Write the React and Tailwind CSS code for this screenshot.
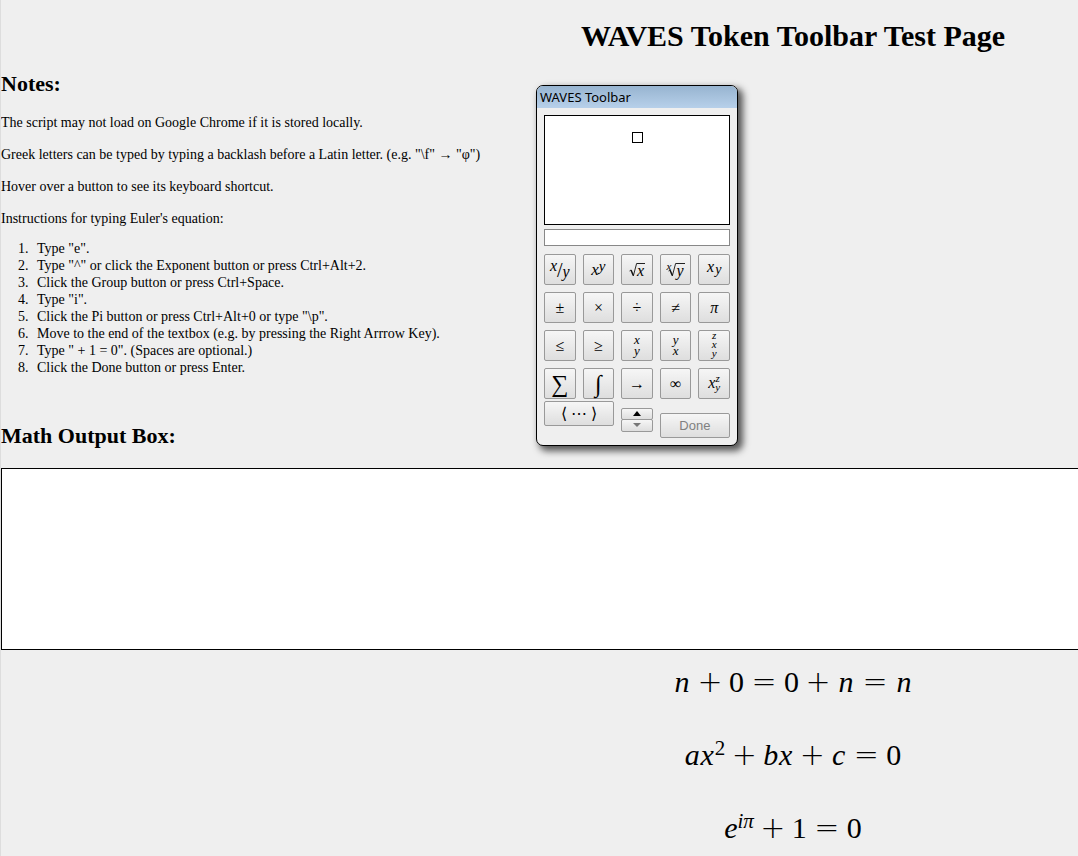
import React from "react";

const notes = [
  "The script may not load on Google Chrome if it is stored locally.",
  'Greek letters can be typed by typing a backlash before a Latin letter. (e.g. "\\f" → "φ")',
  "Hover over a button to see its keyboard shortcut.",
  "Instructions for typing Euler's equation:",
];

const steps = [
  'Type "e".',
  'Type "^" or click the Exponent button or press Ctrl+Alt+2.',
  "Click the Group button or press Ctrl+Space.",
  'Type "i".',
  'Click the Pi button or press Ctrl+Alt+0 or type "\\p".',
  "Move to the end of the textbox (e.g. by pressing the Right Arrrow Key).",
  'Type " + 1 = 0". (Spaces are optional.)',
  "Click the Done button or press Enter.",
];

const face =
  "rounded-[2px] border border-[#999] bg-linear-to-b from-[#f6f6f6] to-[#dedede] hover:to-[#ececec]";

function Root({ index, children }) {
  return (
    <span className="flex items-center italic text-[16px] leading-4">
      {index && <span className="-mr-[3px] -mt-2 text-[11px] leading-2">{index}</span>}
      <svg width="8" height="16" viewBox="0 0 8 16" fill="none" stroke="#111" aria-hidden="true">
        <path d="M0.5 9 L2 8" strokeWidth="0.8" />
        <path d="M2 8 L4.3 13.5" strokeWidth="1.5" />
        <path d="M4.3 14 L7.6 1.5 H8" strokeWidth="0.9" />
      </svg>
      <span className="h-[14px] border-t border-[#222] pr-px leading-[14px]">{children}</span>
    </span>
  );
}

const keys = [
  ["Fraction", <span className="flex items-center italic text-[16px] leading-4"><span className="pb-2">x</span><span className="text-[20px] not-italic">/</span><span className="pt-1">y</span></span>],
  ["Exponent", <span className="flex italic text-[17px] leading-4"><span>x</span><span className="-mt-1 text-[15px]">y</span></span>],
  ["Square root", <Root>x</Root>],
  ["Nth root", <Root index="x">y</Root>],
  ["Subscript", <span className="flex gap-px pb-[2px] italic text-[16px] leading-4"><span>x</span><span className="pt-[3px] text-[14px]">y</span></span>],
  ["Plus or minus", "±"],
  ["Times", "×"],
  ["Divide", "÷"],
  ["Not equal", "≠"],
  ["Pi", <i>π</i>],
  ["Less than or equal", "≤"],
  ["Greater than or equal", "≥"],
  ["Underscript", <span className="flex flex-col pb-[2px] italic text-[13px] leading-[11px]"><span>x</span><span>y</span></span>],
  ["Overscript", <span className="flex flex-col pb-[2px] italic text-[13px] leading-[11px]"><span>y</span><span>x</span></span>],
  ["Under and over script", <span className="flex flex-col pb-[2px] italic text-[11px] leading-[9px]"><span>z</span><span>x</span><span>y</span></span>],
  ["Summation", <span className="text-[24px] leading-6">∑</span>],
  ["Integral", <span className="text-[24px] leading-6">∫</span>],
  ["Arrow", "→"],
  ["Infinity", "∞"],
  ["Subscript and superscript", <span className="flex items-center pb-[2px] italic text-[16px] leading-4"><span>x</span><span className="flex flex-col text-[11px] leading-[9px]"><span>z</span><span>y</span></span></span>],
];

function Toolbar() {
  return (
    <section
      aria-label="WAVES Toolbar"
      className="absolute left-[535px] top-[85px] w-[202px] overflow-hidden rounded-[7px] border border-black bg-[#efefef] shadow-[4px_4px_7px_1px_#555]"
    >
      <h2 className="h-[22px] bg-linear-to-b from-[#97b4d0] to-[#b7d0ea] pl-[3px] font-['Noto_Sans',sans-serif] text-[13px] leading-[22px]">
        WAVES Toolbar
      </h2>
      <div className="p-[7px]">
        <div className="flex h-[110px] justify-center border border-black bg-white pt-4">
          <svg width="11" height="11" viewBox="0 0 11 11" aria-label="Empty token" role="img">
            <rect x="0.5" y="0.5" width="10" height="10" fill="none" stroke="#000" />
          </svg>
        </div>
        <input
          aria-label="Token input"
          className="mt-1 block h-[17px] w-full border border-[#888] bg-white px-1 text-[12px] outline-none"
        />
        <div className="mt-2 grid grid-cols-5 gap-[7px]">
          {keys.map(([label, glyph]) => (
            <button
              key={label}
              title={label}
              aria-label={label}
              className={`flex h-[31px] items-center justify-center text-[16px] leading-4 ${face}`}
            >
              {glyph}
            </button>
          ))}
        </div>
        <div className="mt-[2px] grid h-[37px] grid-cols-5 gap-x-[7px]">
          <button title="Group" className={`col-span-2 h-[25px] self-start text-[16px] leading-5 ${face}`}>
            ⟨ ⋯ ⟩
          </button>
          <div className="flex flex-col self-center">
            <button aria-label="Previous" className={`flex h-3 items-center justify-center ${face}`}>
              <svg width="8" height="5" viewBox="0 0 8 5" aria-hidden="true"><path d="M0 5 L4 0 L8 5Z" /></svg>
            </button>
            <button aria-label="Next" className={`-mt-px flex h-[13px] items-center justify-center ${face}`}>
              <svg width="8" height="4" viewBox="0 0 8 4" fill="#777" aria-hidden="true"><path d="M0 0 H8 L4 4Z" /></svg>
            </button>
          </div>
          <button disabled className={`col-span-2 h-[25px] self-end font-['Liberation_Sans',sans-serif] text-[13px] leading-4 text-[#808080] ${face}`}>
            Done
          </button>
        </div>
      </div>
    </section>
  );
}

const op = "text-center font-['DejaVu_Sans_Light','DejaVu_Sans',sans-serif] font-extralight text-[30px]";
const V = ({ children }) => <i className="w-[18px] text-center">{children}</i>;
const X = ({ children }) => <i className="w-[15px] text-center">{children}</i>;
const N = ({ children }) => <span className="w-[15px] text-center">{children}</span>;
const Plus = () => <span className={`w-[38px] ${op}`}>+</span>;
const Eq = () => <span className={`w-10 ${op}`}>=</span>;

export default function App() {
  return (
    <main className="relative min-h-screen overflow-hidden border-l border-[#ddd] bg-[#efefef] font-['Liberation_Serif',serif] text-[14px] leading-[17px] text-black">
      <h1 className="pl-[507px] pt-5 text-center text-[30px] font-bold leading-8">WAVES Token Toolbar Test Page</h1>
      <h2 className="mt-5 text-[22px] font-bold leading-6">Notes:</h2>
      <div className="mt-[18px] flex flex-col gap-[15px]">
        {notes.map((n) => (
          <p key={n}>{n}</p>
        ))}
      </div>
      <ol className="mt-[13px] list-decimal pl-[31px]">
        {steps.map((s) => (
          <li key={s} className="pl-[5px]">{s}</li>
        ))}
      </ol>
      <h2 className="mt-12 text-[22px] font-bold leading-6">Math Output Box:</h2>
      <div className="mt-5 h-[182px] border-y border-l border-black bg-white" />
      <Toolbar />
      <div className="flex flex-col items-center gap-[33px] pl-[507px] pt-3 text-[30px] leading-10">
        <p className="flex h-10 items-baseline">
          <V>n</V><Plus /><N>0</N><Eq /><N>0</N><Plus /><V>n</V><Eq /><V>n</V>
        </p>
        <p className="flex h-10 items-baseline">
          <X>a</X><X>x</X><sup className="text-[21px]">2</sup><Plus /><X>b</X><X>x</X><Plus /><X>c</X><Eq /><N>0</N>
        </p>
        <p className="flex h-10 items-baseline">
          <i>e</i><sup className="text-[21px] italic">iπ</sup><Plus /><N>1</N><Eq /><N>0</N>
        </p>
      </div>
    </main>
  );
}
